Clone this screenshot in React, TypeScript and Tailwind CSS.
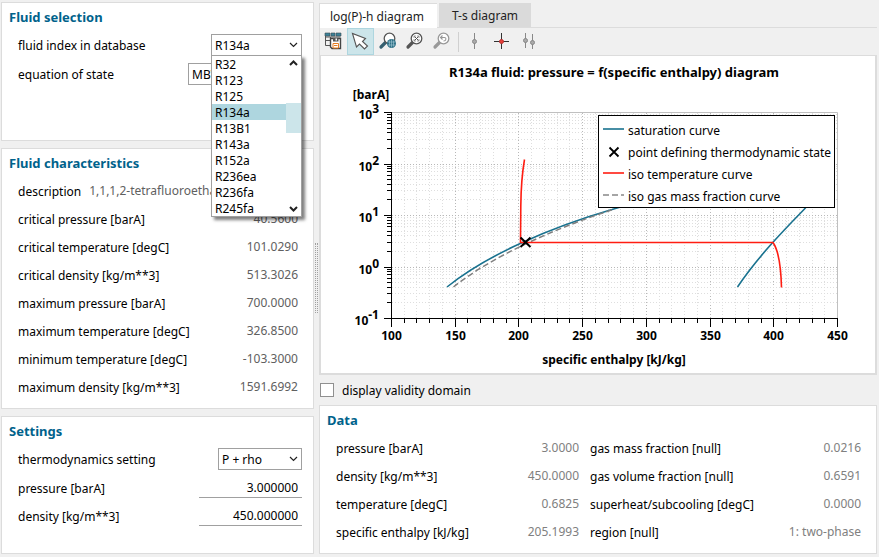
import React, { useState } from 'react';

const FLUIDS = ['R32', 'R123', 'R125', 'R134a', 'R13B1', 'R143a', 'R152a', 'R236ea', 'R236fa', 'R245fa'];

const CHARACTERISTICS = [
  ['critical pressure [barA]', '40.5600'],
  ['critical temperature [degC]', '101.0290'],
  ['critical density [kg/m**3]', '513.3026'],
  ['maximum pressure [barA]', '700.0000'],
  ['maximum temperature [degC]', '326.8500'],
  ['minimum temperature [degC]', '-103.3000'],
  ['maximum density [kg/m**3]', '1591.6992'],
];

const DATA_LEFT = [
  ['pressure [barA]', '3.0000'],
  ['density [kg/m**3]', '450.0000'],
  ['temperature [degC]', '0.6825'],
  ['specific enthalpy [kJ/kg]', '205.1993'],
];

const DATA_RIGHT = [
  ['gas mass fraction [null]', '0.0216'],
  ['gas volume fraction [null]', '0.6591'],
  ['superheat/subcooling [degC]', '0.0000'],
  ['region [null]', '1: two-phase'],
];

function Panel({ title, className = '', children }: { title: string; className?: string; children: React.ReactNode }) {
  return (
    <section className={`border border-[#dcdcdc] bg-white pt-1 pl-[7px] pr-[11px] ${className}`}>
      <h2 className="text-[13px] leading-5 font-bold text-[#00628b]">{title}</h2>
      {children}
    </section>
  );
}

function Chevron({ up = false, bold = false }: { up?: boolean; bold?: boolean }) {
  return (
    <svg width="9" height="6" viewBox="0 0 9 6" fill="none" stroke="#222" strokeWidth={bold ? 2 : 1.2}>
      <path d={up ? 'M1 5 L4.5 1.5 L8 5' : 'M1 1 L4.5 4.5 L8 1'} />
    </svg>
  );
}

interface SelectProps {
  id: string;
  value: string;
  options: string[];
  onChange: (value: string) => void;
  className: string;
}

function Select({ id, value, options, onChange, className }: SelectProps) {
  return (
    <div className={`relative ${className}`}>
      <select
        id={id}
        value={value}
        onChange={(e) => onChange(e.target.value)}
        className="block h-[22px] w-full appearance-none border border-[#a0a0a0] bg-white pt-0.5 pl-[3px] leading-[18px] outline-none"
      >
        {options.map((option) => (
          <option key={option}>{option}</option>
        ))}
      </select>
      <span className="pointer-events-none absolute inset-y-0 right-1 flex items-center">
        <Chevron />
      </span>
    </div>
  );
}

function Rows({ rows, valueClass }: { rows: string[][]; valueClass: string }) {
  return (
    <dl>
      {rows.map(([label, value]) => (
        <div key={label} className="flex h-7 items-center justify-between">
          <dt className="whitespace-nowrap">{label}</dt>
          <dd className={`pb-0.5 whitespace-nowrap ${valueClass}`}>{value}</dd>
        </div>
      ))}
    </dl>
  );
}

function ToolButton({ label, active = false, children }: { label: string; active?: boolean; children: React.ReactNode }) {
  return (
    <button
      aria-label={label}
      className={`flex size-[27px] items-center justify-center ${active ? 'bg-[#cce5ea] outline outline-[#aed6df] -outline-offset-1' : ''}`}
    >
      <svg width="27" height="27" viewBox="0 0 27 27" fill="none">
        {children}
      </svg>
    </button>
  );
}

function Lens({ color, handle }: { color: string; handle: string }) {
  return (
    <>
      <path d="M11.5 14.5 L7 19" stroke={handle} strokeWidth="3.2" strokeLinecap="round" />
      <circle cx="15.5" cy="10.5" r="5.3" fill="#fff" stroke={color} strokeWidth="1.3" />
    </>
  );
}

function Toolbar() {
  return (
    <div className="flex h-[27px] items-center bg-[#f0f0f0]">
      <ToolButton label="Save table">
        <path d="M5.5 5.5 V17.5 H10 M5.5 12.5 H10 M5.5 9 H20.5 M10.5 9 V12" stroke="#555" />
        <path d="M5 5 H10 V8 H5 Z M11 5 H15 V8 H11 Z M16 5 H21 V8 H16 Z" fill="#3b8299" stroke="#3d4a50" strokeWidth="0.6" />
        <path d="M10.5 10.5 H20.5 V20.5 H12 L10.5 19 Z" fill="#fff" stroke="#444" strokeWidth="1.4" />
        <path d="M13 10 H18.5 V13.5 H13 Z" fill="#555" />
        <path d="M15.5 10.5 H17 V12.5 H15.5 Z" fill="#fff" />
        <path d="M13 15.5 H18.5 V20 H13 Z" fill="#fff" stroke="#e87d20" />
        <path d="M14 17.5 H17.5" stroke="#e87d20" />
      </ToolButton>
      <ToolButton label="Select" active>
        <path d="M5.5 5.5 L9.5 19 L12.5 16 L17.5 21 L20.5 18 L15.5 13.5 L18.5 10.5 Z" fill="#fff" stroke="#555" strokeWidth="1.1" />
      </ToolButton>
      <ToolButton label="Zoom">
        <Lens color="#555" handle="#355f70" />
        <circle cx="17.5" cy="15.5" r="4.5" fill="#2e7187" />
        <path d="M14 14 H21 M14 17 H21 M17.5 11.5 V19.5 M15.5 12.5 V18.5 M19.5 12.5 V18.5" stroke="#a5cad6" strokeWidth="0.6" />
      </ToolButton>
      <ToolButton label="Reset zoom">
        <Lens color="#555" handle="#555" />
        <path d="M13.5 8.5 L17.5 12.5 M17.5 8.5 L13.5 12.5" stroke="#555" />
        <path d="M13 10 V8 H15 M18 10 V8 H16 M13 11 V13 H15 M18 11 V13 H16" stroke="#777" strokeWidth="0.7" />
      </ToolButton>
      <ToolButton label="Previous zoom">
        <Lens color="#999" handle="#999" />
        <path d="M14.5 7.5 L12.5 9.5 L14.5 11.5 M12.5 9.5 H16.5 C18.5 9.5 18.5 13 15.5 13" stroke="#999" strokeWidth="1.1" />
      </ToolButton>
      <span className="mr-[2px] ml-[3px] h-5 w-px bg-[#d0d0d0]" />
      <ToolButton label="Marker">
        <path d="M13.5 5 V21" stroke="#888" />
        <circle cx="13.5" cy="13.5" r="2" fill="#aaa" stroke="#888" />
      </ToolButton>
      <ToolButton label="Crosshair">
        <path d="M13.5 5 V21 M6 13.5 H21" stroke="#333" />
        <circle cx="13.5" cy="13.5" r="2" fill="#e8403a" stroke="#b33" />
      </ToolButton>
      <ToolButton label="Double marker">
        <path d="M10.5 5 V20 M17.5 6 V21" stroke="#888" />
        <circle cx="10.5" cy="12.5" r="2" fill="#aaa" stroke="#888" />
        <circle cx="17.5" cy="14.5" r="2" fill="#aaa" stroke="#888" />
      </ToolButton>
    </div>
  );
}

// Plot area inside the 554 x 317 drawing
const LEFT = 70.5;
const RIGHT = 516.5;
const TOP = 56.5;
const BOTTOM = 262.5;

const xOf = (h: number) => Math.floor(LEFT + ((h - 100) / 350) * (RIGHT - LEFT)) + 0.5;
const yOf = (p: number) => Math.floor(BOTTOM - ((Math.log10(p) + 1) / 4) * (BOTTOM - TOP)) + 0.5;

const X_TICKS = Array.from({ length: 36 }, (_, i) => 100 + i * 10);
const DECADES = [-1, 0, 1, 2, 3];
const Y_MINOR = [-1, 0, 1, 2].flatMap((d) => [2, 3, 4, 5, 6, 7, 8, 9].map((n) => n * 10 ** d));

function Legend() {
  return (
    <g className="text-[12px]">
      <rect x="277.5" y="59.5" width="236" height="92" fill="#fff" stroke="#000" />
      <path d="M282 73 H303" stroke="#19728f" strokeWidth="1.6" />
      <path d="M288.5 91.5 L297.5 100.5 M297.5 91.5 L288.5 100.5" stroke="#000" strokeWidth="1.8" />
      <path d="M282 117 H303" stroke="#ff1d12" strokeWidth="1.6" />
      <path d="M282 139 H303" stroke="#888" strokeWidth="1.6" strokeDasharray="6 3" />
      <text x="307" y="79">saturation curve</text>
      <text x="307" y="101">point defining thermodynamic state</text>
      <text x="307" y="123">iso temperature curve</text>
      <text x="307" y="145">iso gas mass fraction curve</text>
    </g>
  );
}

function Chart() {
  return (
    <svg viewBox="0 0 554 317" className="block w-full bg-white" fill="none">
      <g strokeDasharray="1 2" shapeRendering="crispEdges">
        {X_TICKS.map((h) => (
          <path key={h} d={`M${xOf(h)} ${TOP} V${BOTTOM}`} stroke={h % 50 === 0 ? '#b8b8b8' : '#dedede'} />
        ))}
        {Y_MINOR.map((p) => (
          <path key={p} d={`M${LEFT} ${yOf(p)} H${RIGHT}`} stroke="#dedede" />
        ))}
        {DECADES.map((d) => (
          <path key={d} d={`M${LEFT} ${yOf(10 ** d)} H${RIGHT}`} stroke="#b8b8b8" />
        ))}
      </g>
      <path d={`M${LEFT} ${TOP} H${RIGHT} V${BOTTOM}`} stroke="#c0c0c0" />

      <g stroke="#000" shapeRendering="crispEdges">
        <path d={`M${LEFT} ${TOP} V${BOTTOM} H${RIGHT}`} />
        {X_TICKS.map((h) => (
          <path key={h} d={`M${xOf(h)} ${BOTTOM} v${h % 50 === 0 ? 8 : 4}`} />
        ))}
        {Y_MINOR.map((p) => (
          <path key={p} d={`M${LEFT} ${yOf(p)} h-5`} />
        ))}
        {DECADES.map((d) => (
          <path key={d} d={`M${LEFT} ${yOf(10 ** d)} h-8`} />
        ))}
      </g>

      <path
        d="M126 231 C167 198 231 171 291 153.5 C340 138 400 128 440 128 C490 128 502 134 483 153.5 C461 176 436 202 416.5 231"
        stroke="#19728f"
        strokeWidth="1.6"
      />
      <path d="M132.5 231 C170 201 232 173 292 153.5" stroke="#808080" strokeWidth="1.5" strokeDasharray="6 3" />
      <path
        d="M203.5 103.5 C201 118 200 130 199.8 150 L199.5 186.5 H452 C458 195 460 213 460.5 231.5"
        stroke="#ff1d12"
        strokeWidth="1.6"
      />
      <path d="M199.5 181.5 L209.5 191 M209.5 181.5 L199.5 191" stroke="#000" strokeWidth="2" />

      <g className="text-[12px]" fill="#000">
        <Legend />
        <g className="font-bold" textAnchor="middle">
          <text x="293" y="21" className="text-[13px]">
            R134a fluid: pressure = f(specific enthalpy) diagram
          </text>
          <text x="50" y="43">[barA]</text>
          {X_TICKS.filter((h) => h % 50 === 0).map((h) => (
            <text key={h} x={xOf(h)} y="284">
              {h}
            </text>
          ))}
          <text x="293" y="308">specific enthalpy [kJ/kg]</text>
        </g>
        <g className="font-bold" textAnchor="end">
          {DECADES.map((d) => (
            <text key={d} x="58" y={yOf(10 ** d) + 6}>
              10<tspan dy="-6">{d}</tspan>
            </text>
          ))}
        </g>
      </g>
    </svg>
  );
}

export default function App() {
  const [fluid, setFluid] = useState('R134a');
  const [equation, setEquation] = useState('MBWR');
  const [setting, setSetting] = useState('P + rho');
  const [tab, setTab] = useState('ph');

  return (
    <div className="grid min-h-screen grid-cols-[minmax(0,313fr)_5px_minmax(0,558fr)] bg-[#f0f0f0] pt-0.5 pr-0.5 pb-[3px] pl-px font-['Noto_Sans',sans-serif] text-[12px] leading-4 text-black">
      <div className="flex flex-col gap-[7px]">
        <Panel title="Fluid selection" className="pb-[55px]">
          <div className="mt-[7px] flex flex-col gap-[7px] pl-[9px]">
            <div className="flex items-center justify-between">
              <label htmlFor="fluid" className="pt-0.5">fluid index in database</label>
              <div className="relative z-10">
                <Select id="fluid" value={fluid} options={FLUIDS} onChange={setFluid} className="w-[91px]" />
                <div className="absolute top-full left-0 -mt-px w-full border border-[#a0a0a0] bg-white shadow-[3px_3px_3px_rgba(0,0,0,0.5)]">
                  <ul role="listbox" aria-label="fluid index in database">
                    {FLUIDS.map((name) => (
                      <li
                        key={name}
                        role="option"
                        aria-selected={name === fluid}
                        onClick={() => setFluid(name)}
                        className={`h-4 pl-[3px] leading-[18px] ${name === fluid ? 'bg-[#aed6df]' : ''}`}
                      >
                        {name}
                      </li>
                    ))}
                  </ul>
                  <div className="absolute inset-y-0 right-0 flex w-[15px] flex-col items-center justify-between py-1">
                    <Chevron up bold />
                    <Chevron bold />
                    <span className="absolute top-[47px] h-[30px] w-full bg-[#cce5ea]" />
                  </div>
                </div>
              </div>
            </div>
            <div className="flex items-center justify-between">
              <label htmlFor="equation" className="pt-0.5">equation of state</label>
              <Select id="equation" value={equation} options={['MBWR']} onChange={setEquation} className="w-[114px]" />
            </div>
          </div>
        </Panel>

        <Panel title="Fluid characteristics" className="pb-1.5">
          <div className="mt-[5px] pr-1 pl-[9px]">
            <dl className="flex h-7 items-center gap-2">
              <dt>description</dt>
              <dd className="w-[122px] overflow-hidden pb-0.5 whitespace-nowrap text-[#606060]">1,1,1,2-tetrafluoroethane</dd>
            </dl>
            <Rows rows={CHARACTERISTICS} valueClass="text-[#606060]" />
          </div>
        </Panel>

        <Panel title="Settings" className="pb-[23px]">
          <div className="mt-[7px] pl-[9px]">
            <div className="mb-1 flex items-center justify-between">
              <label htmlFor="setting" className="pt-0.5">thermodynamics setting</label>
              <Select id="setting" value={setting} options={['P + rho']} onChange={setSetting} className="w-[84px]" />
            </div>
            <div className="flex h-7 items-center justify-between">
              <label htmlFor="pressure" className="pt-0.5">pressure [barA]</label>
              <input
                id="pressure"
                defaultValue="3.000000"
                className="h-5 w-[103px] border-b border-[#a0a0a0] pr-1 text-right outline-none"
              />
            </div>
            <div className="flex h-7 items-center justify-between">
              <label htmlFor="density" className="pt-0.5">density [kg/m**3]</label>
              <input
                id="density"
                defaultValue="450.000000"
                className="h-5 w-[103px] border-b border-[#a0a0a0] pr-1 text-right outline-none"
              />
            </div>
          </div>
        </Panel>
      </div>

      {/* Splitter handle */}
      <div className="flex items-center justify-center">
        <div className="h-[70px] w-[3px] border-x border-dotted border-[#a0a0a0]" />
      </div>

      <div className="flex flex-col">
        <div className="flex h-[26px] items-end border-b border-[#dcdcdc] text-[#222]" role="tablist">
          <button
            role="tab"
            aria-selected={tab === 'ph'}
            onClick={() => setTab('ph')}
            className="-mb-px h-[25px] w-[118px] border-t border-l border-[#dcdcdc] bg-white pt-px pl-[10px] text-left"
          >
            log(P)-h diagram
          </button>
          <button
            role="tab"
            aria-selected={tab === 'ts'}
            onClick={() => setTab('ts')}
            className="ml-0.5 h-6 w-[92px] bg-[#dadada] pt-px"
          >
            T-s diagram
          </button>
        </div>
        <div className="border-l border-[#dcdcdc]">
          <Toolbar />
        </div>
        <div className="border-2 border-t border-[#dcdcdc]">
          <Chart />
        </div>

        <label className="flex h-[30px] items-center gap-2 pl-px">
          <input type="checkbox" className="size-[14px] appearance-none border border-[#909090] bg-white checked:bg-[#00628b]" />
          <span className="pt-0.5">display validity domain</span>
        </label>

        <Panel title="Data" className="pb-1.5">
          <div className="mt-[5px] grid grid-cols-[243fr_271fr] gap-[11px] pr-1 pl-[9px]">
            <Rows rows={DATA_LEFT} valueClass="text-[#808080]" />
            <Rows rows={DATA_RIGHT} valueClass="text-[#808080]" />
          </div>
        </Panel>
      </div>
    </div>
  );
}
